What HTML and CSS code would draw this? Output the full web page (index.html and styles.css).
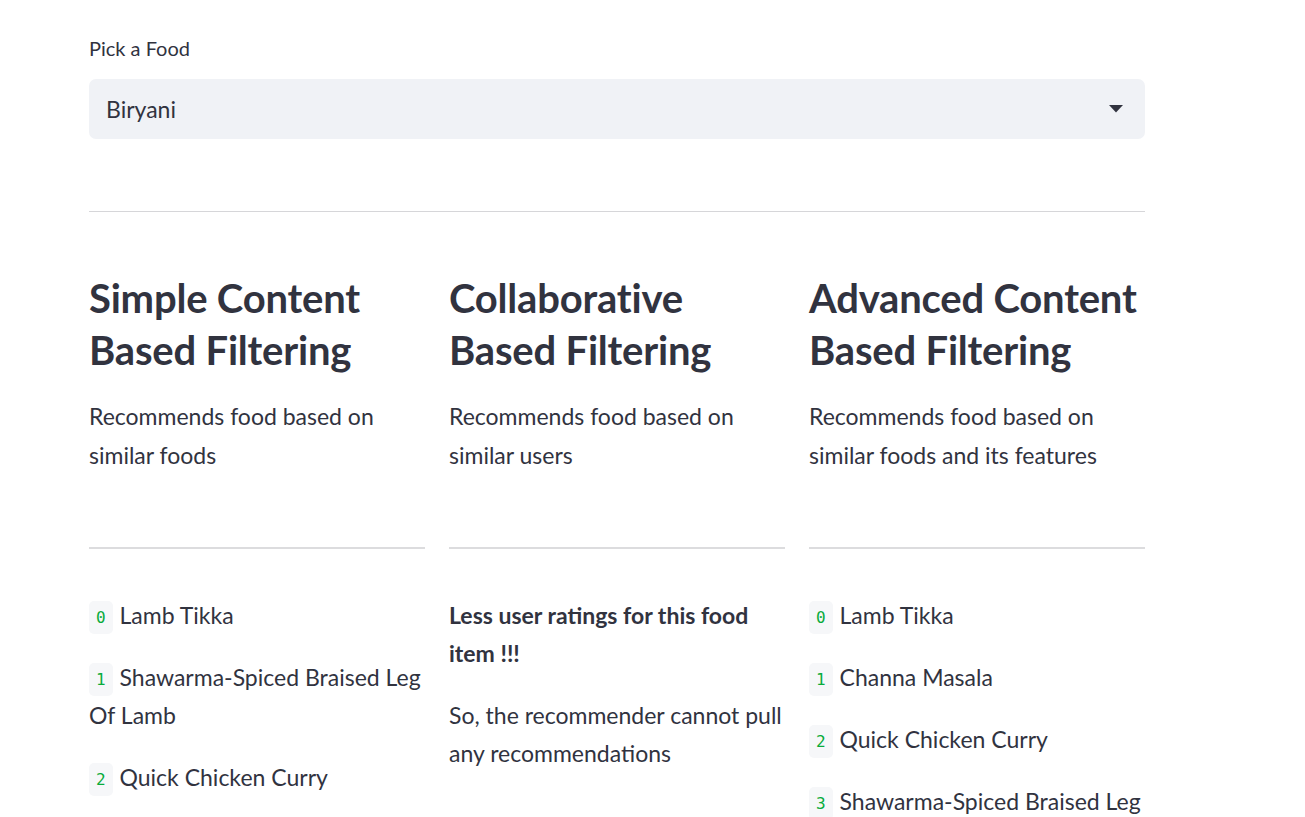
FILE: index.html
```html
<!DOCTYPE html>
<html>
<head>
<meta charset="utf-8">
<link rel="stylesheet" href="styles.css">
</head>
<body>
<main class="main">
  <div class="select-block">
    <label class="label">Pick a Food</label>
    <div class="select">
      <span class="select-value">Biryani</span>
      <svg class="caret" width="14" height="8" viewBox="0 0 14 8"><path d="M0 0 L14 0 L7 7.5 Z" fill="#31333f"/></svg>
    </div>
  </div>
  <hr class="divider">
  <div class="columns">
    <section class="col">
      <h3 class="title">Simple Content Based Filtering</h3>
      <p class="desc">Recommends food based on similar foods</p>
      <hr class="col-divider">
      <p class="item"><code class="badge">0</code> Lamb Tikka</p>
      <p class="item"><code class="badge">1</code> Shawarma-Spiced Braised Leg Of Lamb</p>
      <p class="item"><code class="badge">2</code> Quick Chicken Curry</p>
    </section>
    <section class="col">
      <h3 class="title">Collaborative Based Filtering</h3>
      <p class="desc">Recommends food based on similar users</p>
      <hr class="col-divider">
      <p class="item"><strong>Less user ratings for this food item !!!</strong></p>
      <p class="item">So, the recommender cannot pull any recommendations</p>
    </section>
    <section class="col">
      <h3 class="title">Advanced Content Based Filtering</h3>
      <p class="desc">Recommends food based on similar foods and its features</p>
      <hr class="col-divider">
      <p class="item"><code class="badge">0</code> Lamb Tikka</p>
      <p class="item"><code class="badge">1</code> Channa Masala</p>
      <p class="item"><code class="badge">2</code> Quick Chicken Curry</p>
      <p class="item"><code class="badge">3</code> Shawarma-Spiced Braised Leg Of Lamb</p>
    </section>
  </div>
</main>
</body>
</html>
```
FILE: styles.css
```css
html, body {
  margin: 0;
  padding: 0;
  background: #ffffff;
  overflow: hidden;
}
body {
  font-family: "Lato", "Liberation Sans", sans-serif;
  color: #31333f;
  height: 817px;
}
.main {
  width: 1056px;
  margin-left: 89px;
  padding-top: 35px;
}
.select-block {
  display: flex;
  flex-direction: column;
}
.label {
  font-size: 20px;
  line-height: 26px;
  color: #31333f;
  margin-bottom: 18px;
}
.select {
  height: 60px;
  background: #f0f2f6;
  border-radius: 7px;
  display: flex;
  align-items: center;
  justify-content: space-between;
  padding: 0 22px 0 17px;
}
.select-value {
  font-size: 23px;
}
.caret {
  display: block;
}
.divider {
  border: none;
  border-top: 1px solid #d6d6d9;
  margin: 72px 0 0 0;
  height: 0;
}
.columns {
  display: grid;
  grid-template-columns: repeat(3, 1fr);
  column-gap: 24px;
  padding-top: 60px;
}
.col {
  min-width: 0;
}
.title {
  font-size: 40px;
  font-weight: 700;
  line-height: 52px;
  margin: 0;
  letter-spacing: -0.2px;
}
.desc {
  font-size: 23px;
  line-height: 39px;
  margin: 21px 0 0 0;
  height: 78px;
}
.col-divider {
  border: none;
  border-top: 2px solid #dcdcde;
  margin: 72px 0 0 0;
  height: 0;
}
.item {
  font-size: 23px;
  line-height: 38px;
  margin: 0;
}
.col-divider + .item {
  margin-top: 47px;
}
.item + .item {
  margin-top: 24px;
}
.badge {
  font-family: "DejaVu Sans Mono", "Liberation Mono", monospace;
  font-size: 16px;
  line-height: 1;
  color: #09ab3b;
  background: #f6f7f9;
  border-radius: 5px;
  padding: 7px 7px;
  margin-right: 1px;
  vertical-align: 1px;
}
strong {
  font-weight: 700;
}
```
